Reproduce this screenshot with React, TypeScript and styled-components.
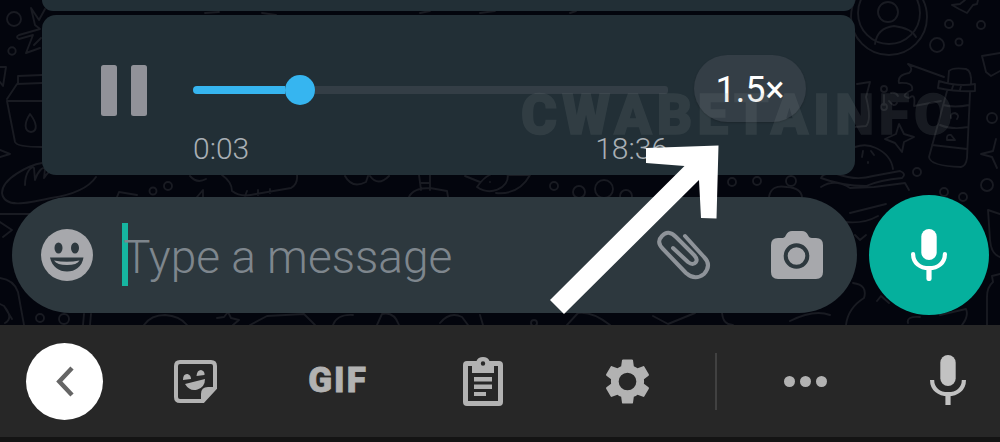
import React from "react";
import styled, { createGlobalStyle } from "styled-components";

const GlobalStyle = createGlobalStyle`
  * { box-sizing: border-box; }
  html, body { margin: 0; padding: 0; background: #03050d; }
  body { font-family: Roboto, "Liberation Sans", sans-serif; overflow: hidden; }
  svg { display: block; flex: none; }
`;

const Screen = styled.div`
  position: relative;
  width: 1000px;
  height: 442px;
  display: flex;
  flex-direction: column;
  overflow: hidden;
`;

const Chat = styled.main`
  position: relative;
  height: 325px;
  flex: none;
  background: #03050d;
`;

const Wallpaper = styled.svg`
  position: absolute;
  inset: 0;
  fill: none;
  stroke: #191b22;
  stroke-width: 1.9;
  stroke-linecap: round;
  stroke-linejoin: round;
`;

const ChatContent = styled.div`
  position: relative;
  display: flex;
  flex-direction: column;
`;

const Bubble = styled.section<{ $clipped?: boolean }>`
  width: 813px;
  height: ${(p) => (p.$clipped ? "11px" : "160px")};
  margin: 0 0 ${(p) => (p.$clipped ? "3.5px" : "0")} 42px;
  border-radius: ${(p) => (p.$clipped ? "0 0 14px 14px" : "14px")};
  background: #222f36;
`;

const VoiceBubble = styled(Bubble)`
  display: flex;
  align-items: flex-start;
  padding: 40px 49px 0 59px;
`;

const PauseButton = styled.div`
  display: flex;
  gap: 14px;
  padding-top: 10.5px;
`;

const PauseBar = styled.span`
  width: 16px;
  height: 51px;
  border-radius: 2.5px;
  background: #919299;
`;

const Player = styled.div`
  width: 475px;
  margin-left: 46px;
  padding-top: 20px;
`;

const Track = styled.div`
  display: flex;
  align-items: center;
  height: 30px;
`;

const Played = styled.span`
  width: 92px;
  height: 8px;
  border-radius: 4px 0 0 4px;
  background: #36b5f0;
`;

const Thumb = styled.span`
  width: 30px;
  height: 30px;
  border-radius: 50%;
  background: #36b5f0;
`;

const Remaining = styled.span`
  flex: 1;
  height: 8px;
  border-radius: 0 3px 3px 0;
  background: #343e46;
`;

const Times = styled.div`
  display: flex;
  justify-content: space-between;
  margin-top: 26px;
  color: #a9afb5;
  font-size: 30px;
  font-weight: 300;
  line-height: 36px;
`;

const SpeedPill = styled.div`
  display: flex;
  justify-content: center;
  align-items: center;
  width: 112px;
  height: 67px;
  margin-left: 26px;
  padding-top: 3px;
  border-radius: 34px;
  background: #343e46;
  color: #fff;
  font-size: 36px;
  line-height: 64px;
  box-shadow: 0 1px 2px rgba(0, 0, 0, 0.2);
`;

const Composer = styled.div`
  display: flex;
  align-items: center;
  margin-top: 20px;
  padding-left: 12px;
  gap: 12px;
`;

const InputBar = styled.div`
  display: flex;
  align-items: center;
  width: 845px;
  height: 116px;
  padding-left: 29px;
  border-radius: 58px;
  background: #2d383e;
`;

const Caret = styled.span`
  width: 6px;
  height: 63px;
  margin-left: 29px;
  background: #16b5a0;
`;

const Placeholder = styled.span`
  width: 529px;
  margin-left: -5px;
  padding-top: 5px;
  color: #7e868d;
  font-size: 46px;
  font-weight: 300;
  line-height: 56px;
  white-space: nowrap;
`;

const RecordButton = styled.div`
  display: flex;
  align-items: center;
  justify-content: center;
  width: 120px;
  height: 120px;
  border-radius: 50%;
  background: #05b09d;
`;

const KeyboardBar = styled.footer`
  display: flex;
  align-items: center;
  height: 112px;
  padding-left: 26px;
  background: #272727;
  color: #b2b2b2;
`;

const BackButton = styled.div`
  display: flex;
  align-items: center;
  justify-content: center;
  width: 77px;
  height: 77px;
  border-radius: 50%;
  background: #fff;
`;

const Slot = styled.div<{ $before: number; $width: number }>`
  display: flex;
  justify-content: center;
  flex: none;
  width: ${(p) => p.$width}px;
  margin-left: ${(p) => p.$before}px;
`;

const GifLabel = styled.span`
  font-size: 35px;
  font-weight: 900;
  line-height: 40px;
  letter-spacing: 2px;
  -webkit-text-stroke: 0.8px #b2b2b2;
`;

const Divider = styled.span`
  width: 2px;
  height: 57px;
  margin-left: 61px;
  background: #414141;
`;

const Dots = styled.div`
  display: flex;
  gap: 5px;
  margin-left: 67px;
`;

const Dot = styled.span`
  width: 11px;
  height: 11px;
  border-radius: 50%;
  background: #b2b2b2;
`;

const KeyboardEdge = styled.div`
  height: 5px;
  background: #141414;
`;

const Watermark = styled.span`
  position: absolute;
  left: 521px;
  top: 85px;
  color: #879191;
  opacity: 0.15;
  font-size: 55px;
  font-weight: 900;
  line-height: 60px;
  letter-spacing: 5.2px;
  -webkit-text-stroke: 1.5px #879191;
  white-space: nowrap;
`;

const Pointer = styled.svg`
  position: absolute;
  left: 545px;
  top: 140px;
`;

const Doodles = () => (
  <Wallpaper width="1000" height="325" viewBox="0 0 1000 325">
    <circle cx="14" cy="19" r="7" />
    <circle cx="12" cy="51" r="3.7" />
    <path d="M31 8 L39 20 L45 9 M31 8 L35 25 L40 29 L19 35 Q15 37 19 39 L33 35 L26 53 L40 48 M34 45 L41 38" />
    <path d="M0 67 L6 67 L3 86 L0 82 M18 83 L18 76 L42 75 M7 99 L17 84 L42 83 M7 101 L42 101 M7 101 L15 142 Q17 147 42 147 M0 150 L10 154 L0 157" />
    <path d="M30 114 C24 123 24 131 31 132 C38 131 37 123 30 114 Z" />
    <path d="M42 163 C30 165 2 178 2 193 C4 208 25 204 51 198 Q85 193 96 177 M25 185 C25 172 32 165 34 168 L35 180 C38 171 43 166 45 169 L44 178 Q50 168 58 171" />
    <circle cx="153" cy="191" r="3.5" /><circle cx="168" cy="186" r="4" />
    <path d="M190 176 Q197 184 206 179 M222 175 Q232 182 232 191 Q241 198 256 194 L291 188 Q298 184 297 175 M245 196 L247 191 M258 195 L258 190 M270 193 L270 189" />
    <path d="M117 197 L119 192 L137 195 M197 197 L203 190 L203 197 M345 176 Q352 189 366 182 L368 176 M370 176 Q378 187 389 176 M419 175 L421 190 M430 175 L430 190 M421 183 L430 183 M409 197 Q413 188 430 188 L447 191 L448 197" />
    <path d="M465 176 L480 182 M477 187 C485 175 496 169 508 175 C508 189 490 196 477 187 Z M508 175 L530 175 Q519 195 496 193 M490 182 L490 182" />
    <circle cx="554" cy="186" r="4" /><circle cx="579" cy="192" r="6" /><circle cx="604" cy="189" r="9" /><circle cx="626" cy="196" r="6" />
    <path d="M90 0 L91 6 M205 13 L219 12 M262 13 L276 15 M278 0 L288 8 M420 13 L430 11 M480 13 L495 11 M570 13 L576 11" />
    <path d="M0 214 L32 214 M0 222 L12 230 L3 237 M0 278 Q14 280 18 292 L24 325 M0 304 L4 306 Q14 318 5 323 M4 306 L12 319" />
    <circle cx="40" cy="318" r="4" /><circle cx="64" cy="319" r="5" />
    <path d="M84 314 L83 325 M91 314 L90 325 M144 325 Q151 315 165 315 Q180 316 187 325 M217 318 L224 317 L228 312 L231 318 L239 320 L233 325 M250 325 L267 316 L304 314 L315 325 M333 325 Q337 314 353 315 M377 325 L382 314 Q394 311 399 325 M440 323 Q450 311 462 317 L468 325 M480 315 L483 325 M567 325 L578 313 Q592 311 610 325 M653 316 L668 324 L695 313 M722 313 Q723 325 733 325 M790 321 Q814 309 830 315" />
    <circle cx="534" cy="323" r="3" />
    <circle cx="889" cy="13" r="31" /><circle cx="889" cy="17" r="38" /><circle cx="888" cy="12" r="10" />
    <path d="M875 44 Q877 28 894 26 Q911 28 916 37 M952 5 L960 4 L965 0 M952 5 L959 9 L967 13 L973 5 L977 4 L978 0" />
    <circle cx="949" cy="24" r="4" /><circle cx="981" cy="25" r="4" /><circle cx="937" cy="45" r="7" /><circle cx="959" cy="42" r="3.5" />
    <path d="M982 56 L1000 53 M982 56 L986 72 L991 76 L1000 71 M908 64 L944 77 M908 64 Q914 69 909 73 Q897 75 899 83 Q914 82 912 90 Q899 96 909 98 Q916 92 914 106 L941 101" />
    <path d="M948 82 L949 71 Q953 67 966 69 Q972 71 971 84 M939 81 Q958 87 975 84 L975 91 Q958 92 938 88 Z M947 91 L929 157 Q930 166 961 167 Q966 166 967 158 L970 93 M943 105 Q955 108 969 105 M940 125 Q952 130 968 127 M932 145 L967 149 M952 89 L953 86 M960 90 L961 86 M951 118 Q950 113 955 113 Q960 115 957 119 M947 140 Q946 134 951 135 L955 140 Z" />
    <path d="M857 84 L870 82 L866 97 Q872 120 866 126 L855 127 M884 105 L884 95 M891 93 Q896 92 898 96 M889 101 Q894 108 897 103" />
    <circle cx="884" cy="89" r="3" /><circle cx="884" cy="107" r="3" />
    <path d="M899 124 L896 134 L885 139 L895 143 L902 152 L904 142 L914 137 L904 134 Z M996 139 L993 151 L981 154 L992 157 L997 168" />
    <circle cx="992" cy="118" r="5" /><circle cx="917" cy="172" r="4" /><circle cx="987" cy="185" r="6" />
    <path d="M855 147 Q866 143 876 148 Q891 155 893 169 M863 151 L862 157 M871 151 L874 155 M868 162 L868 163 M821 178 Q823 172 837 174 Q856 181 873 176 L900 171 Q907 174 902 178 Q880 180 866 186 Q842 186 821 178 Z M821 187 Q835 178 850 188 L874 187 L905 183 L909 190" />
    <circle cx="732" cy="182" r="4" /><circle cx="757" cy="181" r="4" /><circle cx="791" cy="181" r="5" />
    <path d="M769 197 Q771 184 787 187 Q801 188 802 197" /><circle cx="944" cy="192" r="4" /><circle cx="963" cy="197" r="4" />
    <path d="M850 213 L886 204 M845 222 Q864 224 878 216 M855 235 L860 240 L866 235 M853 283 Q868 285 864 298 Q848 308 846 325 M877 301 L881 296 L889 303 M908 323 Q906 316 920 317 M940 315 L966 309 Q969 316 962 325 M988 210 L1000 214 M988 210 L990 240 Q991 254 1000 257 M1000 274 L992 276 L993 282 Q987 287 987 297 L987 325" />
  </Wallpaper>
);

const SmileIcon = () => (
  <svg width="52" height="52" viewBox="0 0 52 52">
    <circle cx="26" cy="26" r="26" fill="#a7a8ac" />
    <g fill="#2d383e">
      <ellipse cx="17.5" cy="19" rx="4" ry="5.5" />
      <ellipse cx="34" cy="19" rx="4" ry="5.5" />
      <path d="M9 28.5 H42.5 C41 38 34 42.5 26 42.5 S11 38 9 28.5Z" />
    </g>
    <path d="M13 31.5 Q26 34 38.5 31.5 Q36 36 26 36 T13 31.5Z" fill="#a7a8ac" />
  </svg>
);

const ClipIcon = () => (
  <svg width="54" height="50" viewBox="0 0 54 50" fill="none" stroke="#8e9399" strokeWidth="4" strokeLinecap="round" strokeLinejoin="round">
    <path d="M16 18 L31 32 Q36 36 39 32 Q41 29 37 25 L19 7 Q11 -1 5 6 Q-1 12 6 19 L29 43 Q38 51 47 44 Q55 35 47 27 L28 6" />
  </svg>
);

const CameraIcon = () => (
  <svg width="52" height="48" viewBox="0 0 52 48">
    <path d="M7 7 H12 Q14 7 15 4 Q17 0 21 0 H31 Q35 0 37 4 Q38 7 41 7 H45 Q52 7 52 14 V41 Q52 48 45 48 H7 Q0 48 0 41 V14 Q0 7 7 7Z" fill="#a7a8ac" />
    <circle cx="25.5" cy="25" r="10.8" fill="none" stroke="#2d383e" strokeWidth="4" />
  </svg>
);

const MicIcon = ({ color, size = 36, round = false }: { color: string; size?: number; round?: boolean }) => (
  <svg width={size} height={(size * 52) / 36} viewBox="0 0 36 52" fill="none" stroke={color} strokeWidth="4.2" strokeLinecap={round ? "round" : "butt"}>
    <rect x="10.3" y="0" width="15.4" height="31" rx="7.7" fill={color} stroke="none" />
    <path d="M2.1 25 C2.1 34 9 39.2 18 39.2 S33.9 34 33.9 25" />
    <path d={round ? "M18 40 V49.5" : "M18 39 V50"} strokeWidth="5.2" />
  </svg>
);

const ChevronIcon = () => (
  <svg width="18" height="31" viewBox="0 0 18 31" fill="none" stroke="#656565" strokeWidth="4.5">
    <path d="M16 2 L3.3 15.5 L16 29" />
  </svg>
);

const StickerIcon = () => (
  <svg width="43" height="43" viewBox="0 0 43 43">
    <path d="M6 2 H37 Q41 2 41 6 V28 L29 41 H6 Q2 41 2 37 V6 Q2 2 6 2Z" fill="none" stroke="#b2b2b2" strokeWidth="4" />
    <path d="M42 27 L29 42 L27 40 V34 Q27 27 34 27Z M9 20 Q9 13.5 13.5 14 Q17 15 17 19Z M22.5 16 Q23 10 27 10 Q31 11 30.5 15Z M11 24 L31 19 Q31 27 23.5 29.5 Q16 32 11 24Z" fill="#b2b2b2" />
  </svg>
);

const ClipboardIcon = () => (
  <svg width="40" height="49" viewBox="0 0 40 49" fill="#b2b2b2">
    <path fillRule="evenodd" d="M4 4 H13.5 Q15 0 20 0 T26.5 4 H36 Q40 4 40 8 V45 Q40 49 36 49 H4 Q0 49 0 45 V8 Q0 4 4 4Z M5 9 V44 H35 V9 H31 V16 H9 V9Z M20 4.3 A2.2 2.2 0 1 0 20 8.7 A2.2 2.2 0 1 0 20 4.3Z" />
    <path d="M11 20 H29 V24.5 H11Z M11 27.5 H29 V32 H11Z M11 35 H23 V39 H11Z" />
  </svg>
);

const GearIcon = () => (
  <svg width="53" height="53" viewBox="0 0 24 24" fill="#b2b2b2">
    <path d="M19.43 12.98c.04-.32.07-.64.07-.98s-.03-.66-.07-.98l2.11-1.65c.19-.15.24-.42.12-.64l-2-3.46c-.12-.22-.39-.3-.61-.22l-2.49 1c-.52-.4-1.08-.73-1.69-.98l-.38-2.65C14.46 2.18 14.25 2 14 2h-4c-.25 0-.46.18-.49.42l-.38 2.65c-.61.25-1.17.59-1.69.98l-2.49-1c-.23-.09-.49 0-.61.22l-2 3.46c-.13.22-.07.49.12.64l2.11 1.65c-.04.32-.07.65-.07.98s.03.66.07.98l-2.11 1.65c-.19.15-.24.42-.12.64l2 3.46c.12.22.39.3.61.22l2.49-1c.52.4 1.08.73 1.69.98l.38 2.65c.03.24.24.42.49.42h4c.25 0 .46-.18.49-.42l.38-2.65c.61-.25 1.17-.59 1.69-.98l2.49 1c.23.09.49 0 .61-.22l2-3.46c.12-.22.07-.49-.12-.64l-2.11-1.65zM12 16a4 4 0 1 1 0-8 4 4 0 0 1 0 8z" />
  </svg>
);

export default function App() {
  return (
    <Screen>
      <GlobalStyle />
      <Chat>
        <Doodles />
        <ChatContent>
          <Bubble $clipped />
          <VoiceBubble>
            <PauseButton>
              <PauseBar />
              <PauseBar />
            </PauseButton>
            <Player>
              <Track>
                <Played />
                <Thumb />
                <Remaining />
              </Track>
              <Times>
                <span>0:03</span>
                <span>18:36</span>
              </Times>
            </Player>
            <SpeedPill>1.5×</SpeedPill>
          </VoiceBubble>
          <Composer>
            <InputBar>
              <SmileIcon />
              <Caret />
              <Placeholder>Type a message</Placeholder>
              <Slot $before={5} $width={54}><ClipIcon /></Slot>
              <Slot $before={60} $width={52}><CameraIcon /></Slot>
            </InputBar>
            <RecordButton><MicIcon color="#fff" round /></RecordButton>
          </Composer>
        </ChatContent>
        <Watermark>CWABETAINFO</Watermark>
      </Chat>
      <KeyboardBar>
        <BackButton><ChevronIcon /></BackButton>
        <Slot $before={71} $width={43}><StickerIcon /></Slot>
        <Slot $before={90} $width={62}><GifLabel>GIF</GifLabel></Slot>
        <Slot $before={94} $width={40}><ClipboardIcon /></Slot>
        <Slot $before={98} $width={53}><GearIcon /></Slot>
        <Divider />
        <Dots><Dot /><Dot /><Dot /></Dots>
        <Slot $before={103} $width={36}><MicIcon color="#c2c2c2" /></Slot>
      </KeyboardBar>
      <KeyboardEdge />
      <Pointer width="180" height="180" viewBox="545 140 180 180">
        <path d="M646 148 L718.5 145.5 L716.5 218.5 L701 218 L699 180 L564 314 L550 300 L684.5 166 L646 163Z" fill="#fff" />
      </Pointer>
    </Screen>
  );
}
